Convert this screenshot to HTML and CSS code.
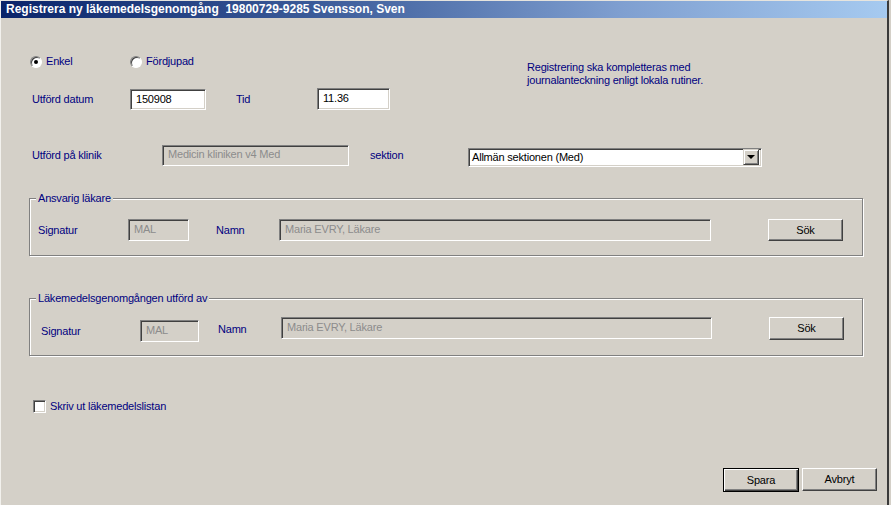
FILE: index.html
```html
<!DOCTYPE html>
<html lang="sv">
<head>
<meta charset="utf-8">
<title>Registrera ny läkemedelsgenomgång</title>
<link rel="stylesheet" href="styles.css">
</head>
<body>
<div class="window">
  <div class="titlebar"><span class="title">Registrera ny läkemedelsgenomgång&nbsp; 19800729-9285 Svensson, Sven</span></div>
  <div class="content">
    <div class="row row-type">
      <label class="choice choice-enkel"><span class="radio checked"></span>Enkel</label>
      <label class="choice choice-ford"><span class="radio"></span>Fördjupad</label>
      <p class="info">Registrering ska kompletteras med<br>journalanteckning enligt lokala rutiner.</p>
    </div>

    <div class="row row-date">
      <span class="lbl lbl-datum">Utförd datum</span>
      <span class="field field-datum">150908</span>
      <span class="lbl lbl-tid">Tid</span>
      <span class="field field-tid">11.36</span>
    </div>

    <div class="row row-klinik">
      <span class="lbl lbl-klinik">Utförd på klinik</span>
      <span class="field disabled field-klinik">Medicin kliniken v4 Med</span>
      <span class="lbl lbl-sektion">sektion</span>
      <span class="select"><span class="select-text">Allmän sektionen (Med)</span><span class="select-btn"><span class="arrow"></span></span></span>
    </div>

    <div class="group group-ansvarig">
      <span class="legend">Ansvarig läkare</span>
      <div class="group-row">
        <span class="lbl g1-sig">Signatur</span>
        <span class="field disabled g1-mal">MAL</span>
        <span class="lbl g1-namn">Namn</span>
        <span class="field disabled g1-name">Maria EVRY, Läkare</span>
        <span class="btn g1-sok">Sök</span>
      </div>
    </div>

    <div class="group group-utford">
      <span class="legend">Läkemedelsgenomgången utförd av</span>
      <div class="group-row">
        <span class="lbl g2-sig">Signatur</span>
        <span class="field disabled g2-mal">MAL</span>
        <span class="lbl g2-namn">Namn</span>
        <span class="field disabled g2-name">Maria EVRY, Läkare</span>
        <span class="btn g2-sok">Sök</span>
      </div>
    </div>

    <label class="row row-print"><span class="checkbox"></span>Skriv ut läkemedelslistan</label>

    <div class="row row-actions">
      <span class="btn btn-default">Spara</span>
      <span class="btn btn-cancel">Avbryt</span>
    </div>
  </div>
</div>
</body>
</html>
```
FILE: styles.css
```css
* { box-sizing: border-box; }

html, body {
  margin: 0;
  padding: 0;
  background: #d4d0c8;
}

body {
  font-family: "Liberation Sans", Arial, sans-serif;
  font-size: 11px;
  line-height: 13px;
  letter-spacing: -0.2px;
  color: #000080;
}

.window {
  width: 889px;
  height: 505px;
  border-top: 1px solid #e6e4de;
  border-left: 1px solid #f2f1ed;
  border-right: 2px solid #3a3a3a;
  background: #d4d0c8;
  overflow: hidden;
}

.titlebar {
  height: 17px;
  padding-left: 5px;
  display: flex;
  align-items: center;
  background: linear-gradient(to right, #0a246a 0%, #3a5a98 35%, #7f9fd0 70%, #a6caf0 100%);
}

.title {
  color: #fff;
  font-weight: bold;
  font-size: 12px;
  letter-spacing: 0;
  white-space: nowrap;
}

.content {
  display: flex;
  flex-direction: column;
}

.row {
  display: flex;
  flex: none;
}

.lbl {
  flex: none;
  white-space: nowrap;
}

/* ---- radio row ---- */
.row-type {
  margin-top: 37px;
  align-items: flex-start;
  height: 31px;
}

.choice {
  flex: none;
  display: flex;
  align-items: center;
  gap: 4px;
  height: 13px;
}

.choice-enkel { margin-left: 29px; width: 100px; }
.choice-ford { width: 397px; }

.radio {
  width: 12px;
  height: 12px;
  border-radius: 50%;
  background: #fff;
  border: 1px solid;
  border-color: #808080 #fff #fff #808080;
  box-shadow: inset 1px 1px 0 #404040;
  display: flex;
  align-items: center;
  justify-content: center;
}

.radio.checked::after {
  content: "";
  width: 4px;
  height: 4px;
  border-radius: 50%;
  background: #000;
}

.info {
  margin: 6px 0 0 0;
  flex: none;
}

/* ---- text fields ---- */
.field {
  flex: none;
  height: 22px;
  background: #fff;
  color: #000;
  padding: 3px 0 0 5px;
  border: 1px solid;
  border-color: #808080 #fff #fff #808080;
  box-shadow: inset 1px 1px 0 #404040, inset -1px -1px 0 #d4d0c8;
  white-space: nowrap;
}

.field.disabled {
  background: #d4d0c8;
  color: #8c8c8c;
}

/* ---- date row ---- */
.row-date {
  margin-top: 2px;
  align-items: center;
  height: 22px;
}

.lbl-datum { margin-left: 31px; width: 98px; }
.field-datum { width: 76px; height: 21px; margin-top: 1px; }
.lbl-tid { margin-left: 30px; width: 81px; }
.field-tid { width: 73px; }

/* ---- klinik row ---- */
.row-klinik {
  margin-top: 35px;
  align-items: center;
  height: 21px;
}

.lbl-klinik { margin-left: 31px; width: 130px; }
.field-klinik { width: 187px; height: 21px; padding-top: 2px; }
.lbl-sektion { margin-left: 21px; width: 98px; }

.select {
  flex: none;
  width: 294px;
  height: 19px;
  margin-top: 3px;
  display: flex;
  align-items: center;
  justify-content: space-between;
  background: #fff;
  color: #000;
  border: 1px solid;
  border-color: #808080 #fff #fff #808080;
  box-shadow: inset 1px 1px 0 #404040, inset -1px -1px 0 #d4d0c8;
  padding: 1px 2px 1px 3px;
}

.select-btn {
  width: 16px;
  height: 16px;
  background: #d4d0c8;
  border: 1px solid;
  border-color: #d4d0c8 #404040 #404040 #d4d0c8;
  box-shadow: inset 1px 1px 0 #fff, inset -1px -1px 0 #808080;
  display: flex;
  align-items: center;
  justify-content: center;
}

.arrow {
  width: 0;
  height: 0;
  border-left: 4px solid transparent;
  border-right: 4px solid transparent;
  border-top: 4px solid #000;
}

/* ---- group boxes ---- */
.group {
  position: relative;
  flex: none;
  margin-left: 28px;
  width: 834px;
  border: 1px solid #808080;
  box-shadow: inset 1px 1px 0 #fff, 1px 1px 0 #fff;
}

.legend {
  position: absolute;
  top: -7px;
  left: 6px;
  padding: 0 2px 0 2px;
  background: #d4d0c8;
  white-space: nowrap;
}

.group-row {
  display: flex;
  align-items: center;
}

.group-ansvarig {
  margin-top: 32px;
  height: 58px;
}

.group-ansvarig .group-row {
  margin-top: 20px;
  height: 22px;
}

.g1-sig { margin-left: 8px; width: 90px; }
.g1-mal { width: 61px; height: 22px; }
.g1-namn { margin-left: 27px; width: 63px; }
.g1-name { width: 432px; }
.g1-sok { margin-left: 57px; width: 75px; height: 22px; }

.group-utford {
  margin-top: 42px;
  height: 58px;
}

.group-utford .group-row {
  margin-top: 18px;
  height: 25px;
  align-items: flex-start;
}

.g2-sig { margin-left: 11px; width: 99px; margin-top: 8px; }
.g2-mal { width: 59px; margin-top: 3px; }
.g2-namn { margin-left: 19px; width: 63px; margin-top: 6px; }
.g2-name { width: 431px; }
.g2-sok { margin-left: 57px; width: 75px; height: 23px; }

/* ---- buttons ---- */
.btn {
  flex: none;
  display: flex;
  align-items: center;
  justify-content: center;
  background: #d4d0c8;
  color: #000;
  border: 1px solid;
  border-color: #fff #404040 #404040 #fff;
  box-shadow: inset -1px -1px 0 #808080;
}

/* ---- checkbox row ---- */
.row-print {
  margin-top: 44px;
  margin-left: 32px;
  align-items: center;
  gap: 4px;
  height: 13px;
}

.checkbox {
  width: 13px;
  height: 13px;
  background: #fff;
  border: 1px solid;
  border-color: #808080 #fff #fff #808080;
  box-shadow: inset 1px 1px 0 #404040, inset -1px -1px 0 #d4d0c8;
}

/* ---- action buttons ---- */
.row-actions {
  margin-top: 55px;
  justify-content: flex-end;
  align-items: flex-start;
  gap: 3px;
  padding-right: 10px;
}

.btn-default {
  width: 76px;
  height: 24px;
  border: 1px solid #000;
  box-shadow: inset 1px 1px 0 #fff, inset -1px -1px 0 #404040, inset -2px -2px 0 #808080;
}

.btn-cancel {
  width: 75px;
  height: 23px;
}
```
